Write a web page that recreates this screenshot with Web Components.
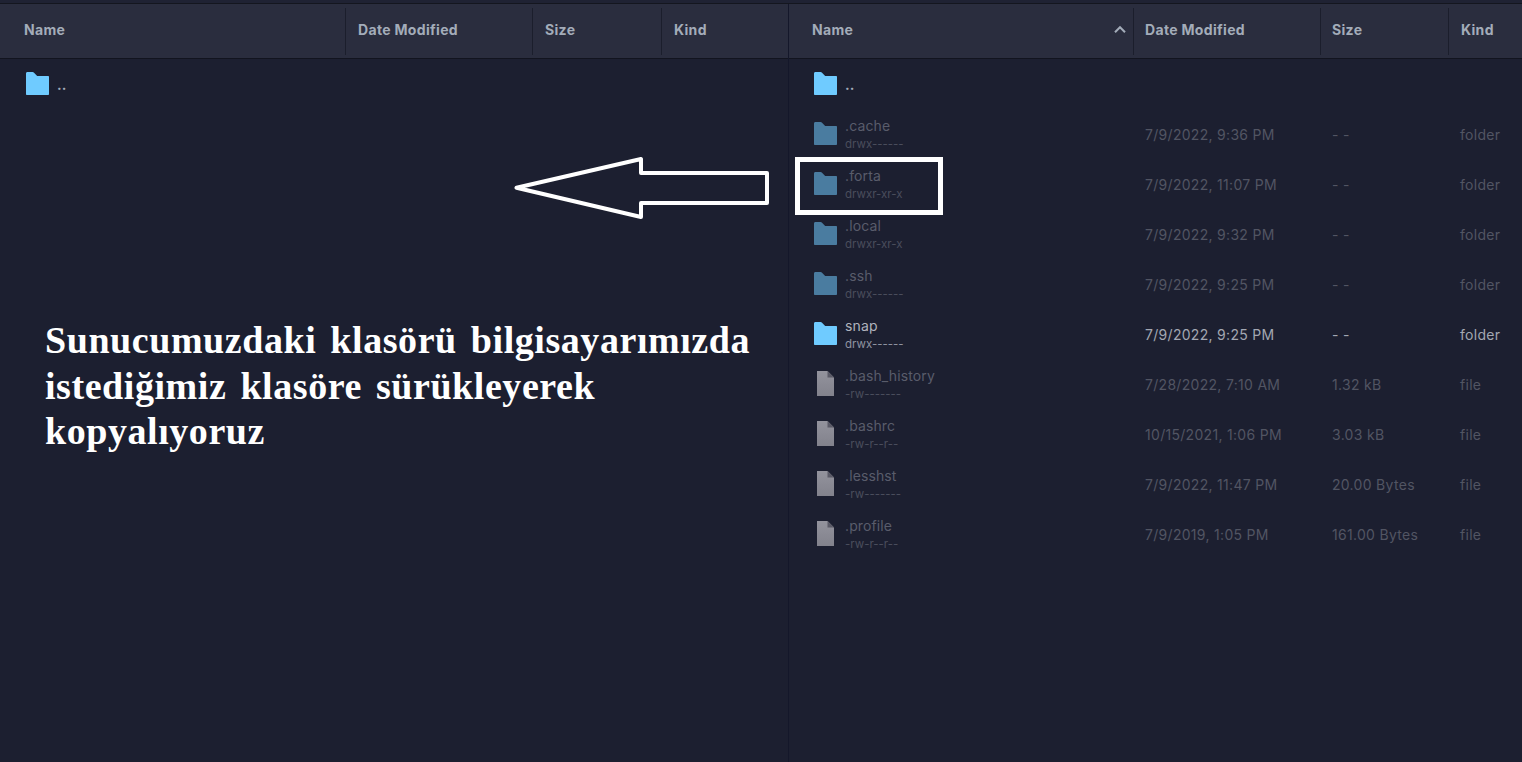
<!DOCTYPE html>
<html lang="tr"><head><meta charset="utf-8"><title>SFTP</title>
<style>
html,body{margin:0;padding:0;height:100%;background:#1c1f30;overflow:hidden}
body{font-family:Inter,"Noto Sans",sans-serif}
</style></head><body>
<sftp-app>
  <file-pane slot="left" cols="345px 187px 129px 127px" pad="24" hp="12">
    <file-head></file-head>
    <file-row type="up" name=".."></file-row>
  </file-pane>
  <file-pane slot="right" cols="344px 187px 128px 1fr" pad="23" hp="11" sorted>
    <file-head sorted></file-head>
    <file-row type="up" name=".."></file-row>
    <file-row type="folder" dim name=".cache" perm="drwx------" date="7/9/2022, 9:36 PM" size="- -" kind="folder"></file-row>
    <file-row type="folder" dim name=".forta" perm="drwxr-xr-x" date="7/9/2022, 11:07 PM" size="- -" kind="folder"></file-row>
    <file-row type="folder" dim name=".local" perm="drwxr-xr-x" date="7/9/2022, 9:32 PM" size="- -" kind="folder"></file-row>
    <file-row type="folder" dim name=".ssh" perm="drwx------" date="7/9/2022, 9:25 PM" size="- -" kind="folder"></file-row>
    <file-row type="folder" name="snap" perm="drwx------" date="7/9/2022, 9:25 PM" size="- -" kind="folder"></file-row>
    <file-row type="file" dim name=".bash_history" perm="-rw-------" date="7/28/2022, 7:10 AM" size="1.32 kB" kind="file"></file-row>
    <file-row type="file" dim name=".bashrc" perm="-rw-r--r--" date="10/15/2021, 1:06 PM" size="3.03 kB" kind="file"></file-row>
    <file-row type="file" dim name=".lesshst" perm="-rw-------" date="7/9/2022, 11:47 PM" size="20.00 Bytes" kind="file"></file-row>
    <file-row type="file" dim name=".profile" perm="-rw-r--r--" date="7/9/2019, 1:05 PM" size="161.00 Bytes" kind="file"></file-row>
  </file-pane>
  <drag-annotation slot="over"></drag-annotation>
</sftp-app>
<script>
class SftpApp extends HTMLElement{constructor(){super();this.attachShadow({mode:'open'}).innerHTML=`<style>
:host{display:block;position:relative;width:1522px;height:762px;background:#1c1f30}
.top{height:3px;background:#1f2233;border-bottom:1px solid #14161f;box-sizing:content-box}
.panes{display:grid;grid-template-columns:788px 1px 1fr;height:758px}
.div{background:#14172a}
</style><div class="top"></div><div class="panes"><slot name="left"></slot><div class="div"></div><slot name="right"></slot></div><slot name="over"></slot>`}}
class FilePane extends HTMLElement{constructor(){super();this.attachShadow({mode:'open'}).innerHTML=`<style>
:host{display:block;min-width:0}
</style><slot></slot>`}
connectedCallback(){this.style.setProperty('--cols',this.getAttribute('cols'));this.style.setProperty('--pad',this.getAttribute('pad')+'px');this.style.setProperty('--hp',this.getAttribute('hp')+'px')}}
class FileHead extends HTMLElement{constructor(){super();this.attachShadow({mode:'open'}).innerHTML=`<style>
:host{display:grid;grid-template-columns:var(--cols);height:54px;background:#2a2d3e;border-bottom:1px solid #12141f;font:700 14px/1 Inter,sans-serif;color:#a3acb9;letter-spacing:.32px}
.c{display:flex;align-items:center;justify-content:space-between;padding:0 12px 4px var(--hp);margin:4px 0 3px;border-left:1px solid #1b1e2c;box-sizing:border-box;min-width:0}
.c:first-of-type{border-left:0;padding-left:var(--pad)}
.c:last-of-type{padding-left:12px}
svg{display:block;margin-right:-6px}
</style><div class="c"><span>Name</span><span id="s"></span></div><div class="c"><span>Date Modified</span></div><div class="c"><span>Size</span></div><div class="c"><span>Kind</span></div>`}
connectedCallback(){if(this.hasAttribute('sorted'))this.shadowRoot.getElementById('s').innerHTML='<svg width="14" height="9" viewBox="0 0 14 9"><path d="M2 7.200 7 2.200l5 5" fill="none" stroke="#a3acb9" stroke-width="2"/></svg>'}}
class FileRow extends HTMLElement{constructor(){super();this.attachShadow({mode:'open'})}
connectedCallback(){const a=n=>this.getAttribute(n)||'';const t=a('type');const dim=this.hasAttribute('dim');
const folder=`<svg width="24" height="24" viewBox="0 0 24 24"><path d="M1 1.600C1 .7 1.600 0 2.400 0h5.200c.5 0 .9.2 1.200.6L12.200 4H23c.6 0 1 .4 1 1v17c0 .6-.4 1-1 1H2c-.6 0-1-.4-1-1z" fill="${dim?'#4a7ca0':'#6fcbff'}"/></svg>`;
const file=`<svg width="24" height="24" viewBox="0 0 24 24"><defs><linearGradient id="g" x1="0" y1="0" x2="0" y2="1"><stop offset="0" stop-color="#93939d"/><stop offset="1" stop-color="#82828c"/></linearGradient></defs><path d="M4 -1h10.500L21 5.500V24H4z" fill="url(#g)"/><path d="M14.500 -1 21 5.500h-6.500z" fill="#5a5a67"/></svg>`;
const up=t==='up';
this.shadowRoot.innerHTML=`<style>
:host{display:grid;grid-template-columns:var(--cols);height:50px;align-items:center;font:400 14px/1 Inter,sans-serif;color:${dim?'#525563':'#a3a7b2'}}
.n{display:flex;align-items:center;padding-left:var(--pad);gap:8px;min-width:0}
svg{display:block;flex:none;overflow:visible}
.ic{margin-left:1px}
.t{display:flex;flex-direction:column;gap:4px}
.nm{font-size:14px;line-height:16px;letter-spacing:.12px;color:${dim?'#595c6b':'#b0b3bd'}}
.pm{font-size:11.500px;line-height:13px;color:${dim?'#4a4d5c':'#8f93a1'}}
.up{font-size:14px;font-weight:700;color:#a3acb9;position:relative;top:1px}
.d,.s,.k{padding-left:12px;padding-top:2px;font-size:14px;letter-spacing:.3px;white-space:nowrap}
</style>
<div class="n"><span class="ic">${t==='file'?file:folder}</span>${up?`<span class="up">..</span>`:`<span class="t"><span class="nm">${a('name')}</span><span class="pm">${a('perm')}</span></span>`}</div>
<div class="d">${a('date')}</div><div class="s">${a('size')}</div><div class="k">${a('kind')}</div>`}}
class DragAnnotation extends HTMLElement{constructor(){super();this.attachShadow({mode:'open'}).innerHTML=`<style>
:host{position:absolute;inset:0;display:block;pointer-events:none}
svg{position:absolute;left:0;top:0}
p{position:absolute;left:45px;top:318px;width:730px;margin:0;font:700 38px/45.500px "Liberation Serif",serif;letter-spacing:.56px;word-spacing:4px;color:#fff}
</style>
<svg width="1522" height="762" fill="none" stroke="#fff" stroke-linejoin="round">
<path d="M516.500 187.700 641 159V173H767V203H641V217z" stroke-width="4"/>
<rect x="797.500" y="159.500" width="143" height="53" stroke-width="5" stroke-linejoin="miter"/>
</svg>
<p>Sunucumuzdaki klasörü bilgisayarımızda<br>istediğimiz klasöre sürükleyerek<br>kopyalıyoruz</p>`}}
customElements.define('sftp-app',SftpApp);customElements.define('file-pane',FilePane);customElements.define('file-head',FileHead);customElements.define('file-row',FileRow);customElements.define('drag-annotation',DragAnnotation);
</script>
</body></html>
